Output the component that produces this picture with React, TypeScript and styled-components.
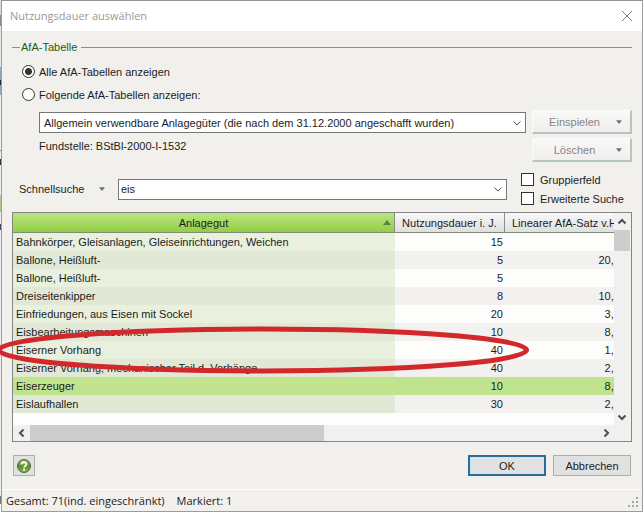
import React, { useState } from "react";
import styled, { createGlobalStyle } from "styled-components";

const GlobalStyle = createGlobalStyle`
  *, *::before, *::after { box-sizing: border-box; }
  body { margin: 0; background: #fff; color: #1c1c1c; font: 11px/18px "Liberation Sans", Arial, sans-serif; }
  button, input, select { font: inherit; color: inherit; margin: 0; border-radius: 0; }
`;

const Desktop = styled.div`
  min-height: 100vh;
  padding: 1px 0 2px 1px;
  background: linear-gradient(
    #d8d8d8 0 15px, #8c8c8c 15px 26px, #e8e8e8 26px 67px, #87a9c2 67px 80px, #1b2735 80px 85px,
    #87a9c2 85px 95px, #f0f0f0 95px 150px, #8b8b70 150px 151px, #eee 151px 159px, #333 159px 165px,
    #eee 165px 195px, #b8c48a 195px 212px, #eee 212px 224px, #445 224px 230px, #eee 230px 496px, #777 496px 504px, #fff 504px
  );
`;

const Dialog = styled.main`
  position: relative;
  display: flex;
  flex-direction: column;
  min-height: calc(100vh - 3px);
  background: #f2f0ed;
  border: 1px solid #9c9c9c;
  border-top-width: 0;
  box-shadow: 0 -1px 0 #949494;
`;

const TitleBar = styled.header`
  display: flex;
  align-items: center;
  justify-content: space-between;
  height: 30px;
  padding: 0 9px 0 8px;
  background: #fff;
  color: #999;
`;

const Title = styled.h1`
  margin: 0;
  font: 11px/18px "Open Sans", sans-serif;
`;

const PlainButton = styled.button`
  display: flex;
  align-items: center;
  justify-content: center;
  padding: 0;
  border: 0;
  background: transparent;
`;

const Body = styled.div`
  flex: 1;
  display: flex;
  flex-direction: column;
  padding: 7px 10px 0;
`;

const Group = styled.fieldset`
  min-width: 0;
  margin: 0;
  padding: 4px 0 0;
  border: 0;
  border-top: 1px solid #8f8f8f;
`;

const Legend = styled.legend`
  margin-left: 8px;
  padding: 0 4px 0 1px;
  color: #2c5a10;
`;

const RadioLabel = styled.label`
  display: flex;
  align-items: center;
  gap: 4px;
  width: max-content;
  height: 23px;
  margin-left: 10px;
`;

const Radio = styled.input`
  appearance: none;
  width: 13px;
  height: 13px;
  border: 1px solid #333;
  border-radius: 50%;
  background: #fff;
  &:checked { background: radial-gradient(circle, #333 0 3px, #fff 4px); }
`;

const SourceArea = styled.div`
  display: grid;
  grid-template-columns: minmax(0, 1fr) 100px;
  gap: 6px;
  margin-top: 4px;
  padding-left: 27px;
`;

const SourceColumn = styled.div`
  display: flex;
  flex-direction: column;
  gap: 4px;
  padding-top: 2px;
`;

const ButtonColumn = styled.div`
  display: flex;
  flex-direction: column;
  gap: 4px;
`;

const Combo = styled.div`
  display: flex;
  align-items: center;
  position: relative;
  height: 21px;
  border: 1px solid #767676;
  background: #fff;
`;

const ComboSelect = styled.select`
  appearance: none;
  width: 100%;
  height: 19px;
  padding: 0 20px 0 4px;
  border: 0;
  background: transparent;
  outline: 0;
`;

const ComboArrow = styled.span`
  position: absolute;
  right: 3px;
  display: flex;
  pointer-events: none;
`;

const ComboInput = styled.input`
  flex: 1;
  min-width: 0;
  height: 19px;
  padding: 0 2px;
  border: 0;
  background: transparent;
  outline: 0;
`;

const Source = styled.p`
  margin: 0;
`;

const MenuButton = styled.button`
  display: grid;
  grid-template-columns: 1fr 22px;
  align-items: center;
  justify-items: center;
  height: 24px;
  padding: 0 0 0 8px;
  border: 1px solid #fafafa;
  border-right: 2px solid #b5c5c1;
  border-bottom: 2px solid #b5c5c1;
  background: linear-gradient(#f8f8f7, #f0efed);
  color: #858585;
`;

const SearchRow = styled.div`
  display: grid;
  grid-template-columns: 98px minmax(0, 1fr) 117px;
  align-items: center;
  column-gap: 8px;
  margin-top: 8px;
`;

const SearchCaption = styled.div`
  display: flex;
  align-items: center;
  justify-content: space-between;
  padding-left: 7px;
  margin-right: 5px;
`;

const Options = styled.div`
  padding-left: 6px;
`;

const CheckLabel = styled.label`
  display: flex;
  align-items: center;
  gap: 6px;
  height: 19px;
  white-space: nowrap;
`;

const CheckBox = styled.input`
  appearance: none;
  flex: none;
  width: 13px;
  height: 13px;
  border: 1px solid #333;
  background: #fff;
  &:checked { background: #333; box-shadow: inset 0 0 0 2px #fff; }
`;

const GridFrame = styled.section`
  display: grid;
  grid-template-columns: minmax(0, 1fr) 17px;
  grid-template-rows: 1fr 16px;
  margin-top: 4px;
  border: 1px solid #858585;
  background: #f0f0f0;
`;

const Viewport = styled.div`
  overflow: hidden;
  padding-bottom: 12px;
  background: #fdfdfb;
`;

const Table = styled.table`
  width: calc(100% + 14px);
  table-layout: fixed;
  border-collapse: separate;
  border-spacing: 0;
`;

const Column = styled.col<{ $width?: number }>`
  width: ${(p) => (p.$width ? `${p.$width}px` : "auto")};
`;

const HeadCell = styled.th<{ $sorted?: boolean }>`
  position: relative;
  height: 20px;
  padding: 0;
  border-right: 1px solid #8c8c8c;
  border-bottom: 1px solid #7f8b76;
  background: ${(p) => (p.$sorted ? "linear-gradient(#bbe582, #92cf43)" : "linear-gradient(#f8f8f8, #dfdfdf)")};
  font-weight: 400;
  white-space: nowrap;
`;

const SortMark = styled.span`
  position: absolute;
  right: 3px;
  top: 7px;
  display: flex;
`;

const Row = styled.tr<{ $selected: boolean }>`
  background: ${(p) => (p.$selected ? "#c0e48d" : "#fdfdfb")};
  &:nth-child(even) { background: ${(p) => (p.$selected ? "#c0e48d" : "#f3f1ef")}; }
  td:first-child { background: ${(p) => (p.$selected ? "#c0e48d" : "#e9f0dd")}; }
  &:nth-child(even) td:first-child { background: ${(p) => (p.$selected ? "#c0e48d" : "#e1e8d6")}; }
`;

const Cell = styled.td<{ $number?: boolean }>`
  height: 18px;
  padding: 0 2px 0 3px;
  line-height: 18px;
  text-align: ${(p) => (p.$number ? "right" : "left")};
  white-space: nowrap;
`;

const VerticalBar = styled.div`
  display: grid;
  grid-template-rows: 17px 21px 1fr 17px;
  justify-items: stretch;
  padding-right: 1px;
`;

const HorizontalBar = styled.div`
  display: grid;
  grid-template-columns: 17px 49% 1fr 17px;
`;

const Thumb = styled.div`
  background: #cdcdcd;
`;

const Spacer = styled.div``;

const Actions = styled.div`
  display: flex;
  align-items: center;
  gap: 7px;
  margin-top: 13px;
  padding: 0 1px;
`;

const HelpButton = styled(PlainButton)`
  width: 22px;
  height: 21px;
  margin-right: auto;
  border: 1px solid #adadad;
  background: #e1e1e1;
`;

const ActionButton = styled.button<{ $primary?: boolean }>`
  width: 78px;
  height: 21px;
  padding: 0;
  border: ${(p) => (p.$primary ? "2px solid #2b6d99" : "1px solid #adadad")};
  background: #e1e1e1;
  box-shadow: ${(p) => (p.$primary ? "inset 0 0 0 1px #c9e6f6" : "none")};
  line-height: 16px;
`;

const StatusBar = styled.footer`
  display: flex;
  align-items: center;
  gap: 12px;
  height: 22px;
  padding: 0 3px 0 4px;
  border-top: 1px solid #fff;
  font: 11px/18px "Open Sans", sans-serif;
`;

const Grip = styled.svg`
  margin: 4px 0 0 auto;
`;

const Marking = styled.svg`
  position: absolute;
  left: -7px;
  top: 323px;
  width: 84%;
  height: 52px;
  overflow: visible;
  pointer-events: none;
`;

type Direction = "up" | "down" | "left" | "right";
const chevrons: Record<Direction, string> = {
  up: "M1.5 6.5 5 3l3.5 3.5",
  down: "M1.5 3.5 5 7l3.5-3.5",
  left: "M6.5 1.5 3 5l3.5 3.5",
  right: "M3.5 1.5 7 5 3.5 8.5",
};

const Chevron = ({ to, bold }: { to: Direction; bold?: boolean }) => (
  <svg width="10" height="10" viewBox="0 0 10 10" fill="none" stroke="#505050" strokeWidth={bold ? 2 : 1} aria-hidden="true">
    <path d={chevrons[to]} />
  </svg>
);

const Triangle = ({ up }: { up?: boolean }) => (
  <svg width={up ? 8 : 6} height={up ? 5 : 4} viewBox="0 0 8 5" fill={up ? "#5c8238" : "#707070"} aria-hidden="true">
    <path d={up ? "M0 5 4 0l4 5z" : "M0 0h8L4 5z"} />
  </svg>
);

const HelpIcon = () => (
  <svg width="16" height="16" viewBox="0 0 16 16" aria-hidden="true">
    <defs>
      <linearGradient id="helpFill" x1="0" y1="0" x2="0" y2="1">
        <stop offset="0" stopColor="#9abb6b" />
        <stop offset=".5" stopColor="#5c8f2d" />
        <stop offset="1" stopColor="#85b84b" />
      </linearGradient>
    </defs>
    <circle cx="8" cy="8" r="6.5" fill="url(#helpFill)" stroke="#48682e" />
    <path d="M5.6 6.4C5.6 3.5 10.4 3.6 10.4 6.2c0 1.7-2.2 1.6-2.2 3.3" fill="none" stroke="#fff" strokeWidth="1.8" />
    <circle cx="8.1" cy="11.7" r="1.1" fill="#fff" />
  </svg>
);

const assets = [
  ["Bahnkörper, Gleisanlagen, Gleiseinrichtungen, Weichen", "15", ""],
  ["Ballone, Heißluft-", "5", "20,00"],
  ["Ballone, Heißluft-", "5", ""],
  ["Dreiseitenkipper", "8", "10,00"],
  ["Einfriedungen, aus Eisen mit Sockel", "20", "3,00"],
  ["Eisbearbeitungsmaschinen", "10", "8,00"],
  ["Eiserner Vorhang", "40", "1,00"],
  ["Eiserner Vorhang, mechanischer Teil d. Vorhänge", "40", "2,00"],
  ["Eiserzeuger", "10", "8,00"],
  ["Eislaufhallen", "30", "2,00"],
];

export default function App() {
  const [query, setQuery] = useState("eis");
  const [selected, setSelected] = useState(8);

  return (
    <>
      <GlobalStyle />
      <Desktop>
        <Dialog>
          <TitleBar>
            <Title>Nutzungsdauer auswählen</Title>
            <PlainButton type="button" aria-label="Schließen">
              <svg width="12" height="12" viewBox="0 0 12 12" stroke="#777" aria-hidden="true">
                <path d="M1 1l10 10M11 1 1 11" />
              </svg>
            </PlainButton>
          </TitleBar>
          <Body>
            <Group>
              <Legend>AfA-Tabelle</Legend>
              <RadioLabel>
                <Radio type="radio" name="scope" defaultChecked />
                Alle AfA-Tabellen anzeigen
              </RadioLabel>
              <RadioLabel>
                <Radio type="radio" name="scope" />
                Folgende AfA-Tabellen anzeigen:
              </RadioLabel>
              <SourceArea>
                <SourceColumn>
                  <Combo>
                    <ComboSelect aria-label="AfA-Tabelle">
                      <option>Allgemein verwendbare Anlagegüter (die nach dem 31.12.2000 angeschafft wurden)</option>
                    </ComboSelect>
                    <ComboArrow><Chevron to="down" /></ComboArrow>
                  </Combo>
                  <Source>Fundstelle: BStBl-2000-I-1532</Source>
                </SourceColumn>
                <ButtonColumn>
                  <MenuButton type="button" disabled>Einspielen<Triangle /></MenuButton>
                  <MenuButton type="button" disabled>Löschen<Triangle /></MenuButton>
                </ButtonColumn>
              </SourceArea>
            </Group>
            <SearchRow>
              <SearchCaption>
                <label htmlFor="search">Schnellsuche</label>
                <PlainButton type="button" aria-label="Suchart"><Triangle /></PlainButton>
              </SearchCaption>
              <Combo>
                <ComboInput id="search" value={query} onChange={(e) => setQuery(e.target.value)} />
                <ComboArrow><Chevron to="down" /></ComboArrow>
              </Combo>
              <Options>
                <CheckLabel><CheckBox type="checkbox" />Gruppierfeld</CheckLabel>
                <CheckLabel><CheckBox type="checkbox" />Erweiterte Suche</CheckLabel>
              </Options>
            </SearchRow>
            <GridFrame>
              <Viewport>
                <Table>
                  <colgroup>
                    <Column />
                    <Column $width={110} />
                    <Column $width={123} />
                  </colgroup>
                  <thead>
                    <tr>
                      <HeadCell $sorted>Anlagegut<SortMark><Triangle up /></SortMark></HeadCell>
                      <HeadCell>Nutzungsdauer i. J.</HeadCell>
                      <HeadCell>Linearer AfA-Satz v.H.</HeadCell>
                    </tr>
                  </thead>
                  <tbody>
                    {assets.map(([name, years, rate], i) => (
                      <Row key={i} $selected={i === selected} onClick={() => setSelected(i)}>
                        <Cell>{name}</Cell>
                        <Cell $number>{years}</Cell>
                        <Cell $number>{rate}</Cell>
                      </Row>
                    ))}
                  </tbody>
                </Table>
              </Viewport>
              <VerticalBar>
                <PlainButton type="button" aria-label="Nach oben"><Chevron to="up" bold /></PlainButton>
                <Thumb />
                <Spacer />
                <PlainButton type="button" aria-label="Nach unten"><Chevron to="down" bold /></PlainButton>
              </VerticalBar>
              <HorizontalBar>
                <PlainButton type="button" aria-label="Nach links"><Chevron to="left" bold /></PlainButton>
                <Thumb />
                <Spacer />
                <PlainButton type="button" aria-label="Nach rechts"><Chevron to="right" bold /></PlainButton>
              </HorizontalBar>
            </GridFrame>
            <Actions>
              <HelpButton type="button" aria-label="Hilfe"><HelpIcon /></HelpButton>
              <ActionButton type="button" $primary>OK</ActionButton>
              <ActionButton type="button">Abbrechen</ActionButton>
            </Actions>
          </Body>
          <StatusBar>
            <span>Gesamt: 71(ind. eingeschränkt)</span>
            <span>Markiert: 1</span>
            <Grip width="11" height="11" viewBox="0 0 11 11" fill="#a5a5a5" aria-hidden="true">
              <path d="M8 0h2v2H8zM4 4h2v2H4zM8 4h2v2H8zM0 8h2v2H0zM4 8h2v2H4zM8 8h2v2H8z" />
            </Grip>
          </StatusBar>
          <Marking viewBox="0 0 536 52" preserveAspectRatio="none" aria-hidden="true">
            <ellipse cx="267" cy="26" rx="263" ry="21" fill="none" stroke="#d2282c" strokeWidth="5" />
          </Marking>
        </Dialog>
      </Desktop>
    </>
  );
}
